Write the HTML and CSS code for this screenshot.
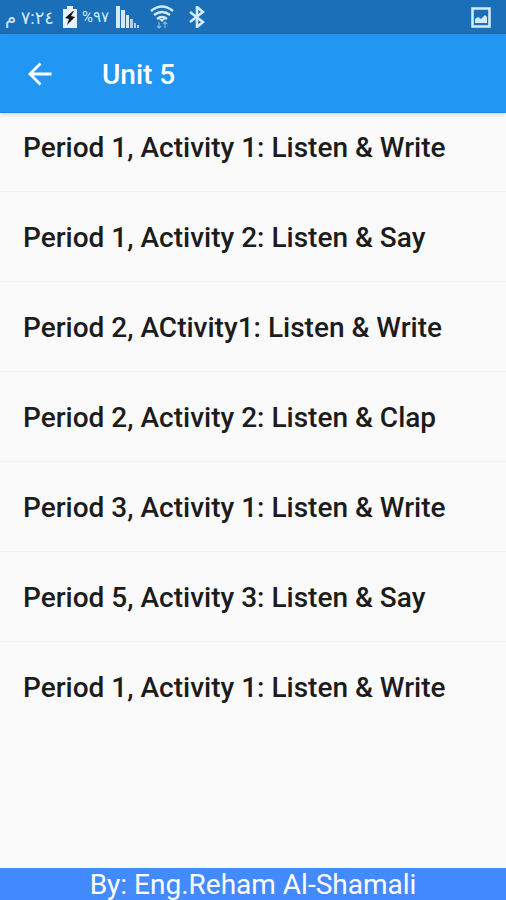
FILE: index.html
```html
<!DOCTYPE html>
<html lang="en">
<head>
  <meta charset="UTF-8">
  <title>Unit 5</title>
  <meta name="viewport" content="width=device-width, initial-scale=1.0">
  <link rel="stylesheet" href="styles.css">
</head>
<body>
  <div class="status-bar">
    <div class="status-group">
      <span class="status-time" dir="rtl" lang="ar">٧:٢٤ م</span>
      <svg class="battery-icon" width="16" height="22" viewBox="0 0 16 22">
        <path fill="#e6f3fc" d="M5 0h6v3h4v19H1V3h4z"/>
        <path fill="#10161c" d="M11 5 3 12l4 1-2 6 8-8-4-1 3-5z"/>
      </svg>
      <span class="status-percent" dir="rtl" lang="ar">٩٧%</span>
      <svg class="signal-icon" width="24" height="22" viewBox="0 0 24 22" fill="#d3eafa">
        <path d="M1 0h4v22H1zM6 4h4v18H6zM11 9h3v13h-3z"/>
        <path d="M15 13h3v9h-3zM19 17h2v5h-2zM22 19h2v3h-2z" opacity=".8"/>
      </svg>
      <svg class="wifi-icon" width="24" height="24" viewBox="0 0 24 24" fill="none" stroke="#d3eafa">
        <path d="M1 6Q12-3 23 6M4 10q8-6 16 0M7 14q5-4 10 0" stroke-width="2.4"/>
        <path d="M9 14h6l-3 3z" fill="#d3eafa" stroke="none"/>
        <path d="M9 17v6M7 21l2 2 2-2M15 23v-6M13 19l2-2 2 2" stroke-width="1.3" opacity=".55"/>
      </svg>
      <svg class="bluetooth-icon" width="16" height="22" viewBox="0 0 16 22" fill="none" stroke="#d3eafa" stroke-width="2.6">
        <path d="m1 6 13 10-6 5V1l6 5L1 16"/>
      </svg>
    </div>
    <svg width="20" height="21" viewBox="0 0 20 21">
      <path d="M1.5 1.5h17v18h-17z" fill="none" stroke="#d3eafa" stroke-width="2.6"/>
      <path d="M4 16v-4l3-2 3 2 4-4 2 2v6z" fill="#d3eafa"/>
    </svg>
  </div>

  <header class="app-bar">
    <button class="back-btn" aria-label="Back">
      <svg width="24" height="24" viewBox="0 0 24 24" fill="none" stroke="#fff" stroke-width="2.8">
        <path d="M23.5 12H2M12.5 1.5 2 12l10.5 10.5"/>
      </svg>
    </button>
    <h1>Unit 5</h1>
  </header>

  <main>
    <ul class="activity-list">
      <li><a href="#">Period 1, Activity 1: Listen &amp; Write</a></li>
      <li><a href="#">Period 1, Activity 2: Listen &amp; Say</a></li>
      <li><a href="#">Period 2, ACtivity1: Listen &amp; Write</a></li>
      <li><a href="#">Period 2, Activity 2: Listen &amp; Clap</a></li>
      <li><a href="#">Period 3, Activity 1: Listen &amp; Write</a></li>
      <li><a href="#">Period 5, Activity 3: Listen &amp; Say</a></li>
      <li><a href="#">Period 1, Activity 1: Listen &amp; Write</a></li>
    </ul>
  </main>

  <footer class="footer">By: Eng.Reham Al-Shamali</footer>
</body>
</html>
```

FILE: styles.css
```css
* {
  box-sizing: border-box;
}

body {
  margin: 0;
  min-height: 100vh;
  display: flex;
  flex-direction: column;
  background: #fafafa;
  color: #1c1c1c;
  font-family: Roboto, "DejaVu Sans", sans-serif;
  font-size: 28px;
}

/* status bar */
.status-bar {
  height: 34px;
  padding: 0 15px 0 4px;
  display: flex;
  align-items: center;
  justify-content: space-between;
  background: #1a6fb8;
  color: #d3eafa;
}

.status-group {
  display: flex;
  align-items: center;
}

.status-time {
  width: 50px;
  font-size: 18px;
  white-space: nowrap;
}

.status-percent {
  font-size: 15px;
  white-space: nowrap;
}

.battery-icon {
  margin: 0 4px 0 8px;
}

.signal-icon {
  margin-left: 6px;
}

.wifi-icon {
  margin: 0 15px 0 11px;
}

/* app bar */
.app-bar {
  height: 79px;
  padding: 2px 24px 0;
  display: flex;
  align-items: center;
  gap: 46px;
  background: #2196f3;
  color: #fff;
  border-bottom: 1px solid #1a8ae6;
  box-shadow: 0 1px 4px rgba(0, 0, 0, 0.2);
}

.app-bar h1 {
  margin: 0;
  font-size: 28px;
  font-weight: 500;
}

.back-btn {
  display: flex;
  padding: 4px;
  border: none;
  background: none;
  cursor: pointer;
}

/* activities */
main {
  flex: 1;
}

.activity-list {
  margin: 0;
  padding: 0;
  list-style: none;
}

.activity-list li {
  border-bottom: 1px solid #f3f3f3;
}

.activity-list li:last-child {
  border-bottom-color: #f8f8f8;
}

.activity-list a {
  display: block;
  padding: 30px 23px 27px;
  line-height: 32px;
  font-weight: 500;
  color: inherit;
  text-decoration: none;
}

.activity-list li:first-child a {
  padding-top: 19px;
}

.footer {
  height: 32px;
  line-height: 34px;
  background: #448aff;
  color: #fff;
  text-align: center;
}
```
